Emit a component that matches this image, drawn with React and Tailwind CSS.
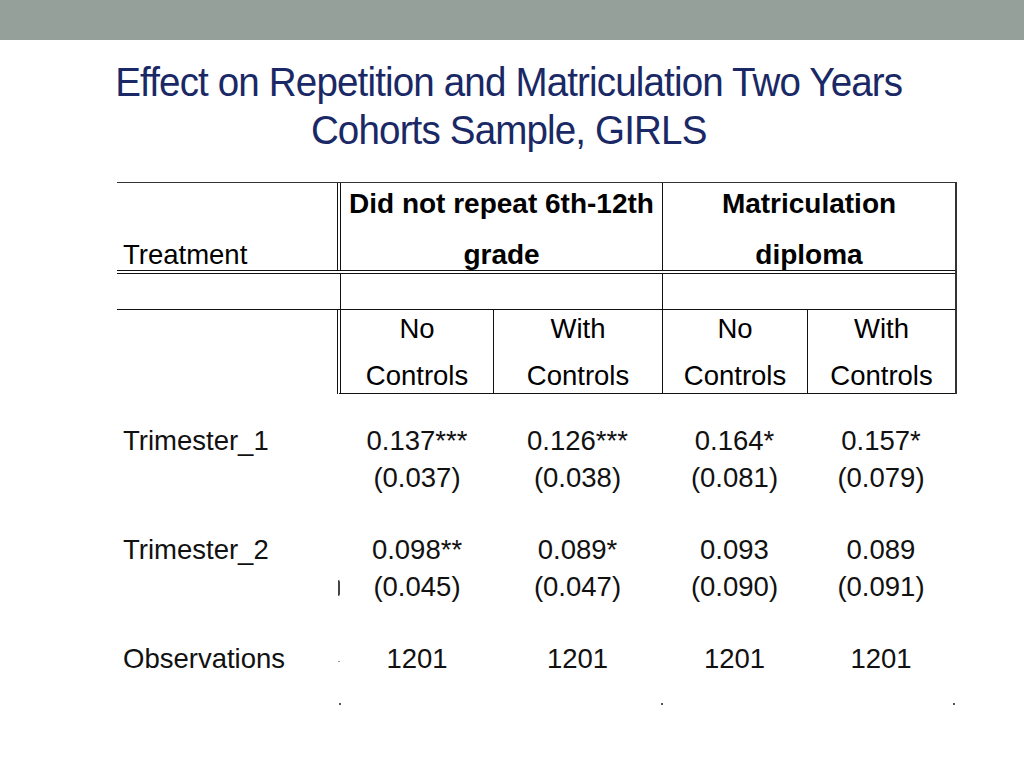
export default function App() {
  const rows = [
    { label: "Trimester_1", a: ["0.137***", "0.126***", "0.164*", "0.157*"], b: ["(0.037)", "(0.038)", "(0.081)", "(0.079)"] },
    { label: "Trimester_2", a: ["0.098**", "0.089*", "0.093", "0.089"], b: ["(0.045)", "(0.047)", "(0.090)", "(0.091)"], mark: true },
  ];
  return (
    <div className="min-h-[768px] w-[1024px] bg-white [font-family:'Liberation_Sans',Arial,sans-serif]">
      <div className="h-[40px] bg-[#95a09a]" />
      <div className="mt-[18px] flex scale-x-[0.94] flex-col items-center pr-[7px] text-[41px] leading-[48px] tracking-[-0.9px] text-[#1a2966]">
        <div>Effect on Repetition and Matriculation Two Years</div>
        <div>Cohorts Sample, GIRLS</div>
      </div>

      <div className="ml-[117px] mt-[28px] w-[840px] text-[27.5px] leading-[37px] text-black">
        <div className="border-t border-r-2 border-t-[#333] border-r-[#333]">
          {/* header row */}
          <div className="flex h-[91px] border-b-4 border-double border-b-[#111]">
            <div className="w-[220px] pl-[6px] pt-[53px]">Treatment</div>
            <div className="w-[325px] border-l-4 border-double border-l-[#111] pt-[2px] text-center text-[28px] font-bold">
              <div>Did not repeat 6th-12th</div>
              <div className="mt-[14px]">grade</div>
            </div>
            <div className="flex-1 border-l border-l-[#111] pt-[2px] text-center text-[28px] font-bold">
              <div>Matriculation</div>
              <div className="mt-[14px]">diploma</div>
            </div>
          </div>
          {/* empty row */}
          <div className="flex h-[36px] border-b border-b-[#111]">
            <div className="w-[223px]" />
            <div className="w-[322px] border-l border-l-[#111]" />
            <div className="flex-1 border-l border-l-[#111]" />
          </div>
          {/* subheader */}
          <div className="flex h-[84px]">
            <div className="w-[220px]" />
            <div className="w-[156px] border-b border-l-4 border-double border-b-[#111] border-l-[#111] text-center">
              <div>No</div>
              <div className="mt-[10px]">Controls</div>
            </div>
            <div className="w-[169px] border-b border-l border-b-[#111] border-l-[#111] text-center">
              <div>With</div>
              <div className="mt-[10px]">Controls</div>
            </div>
            <div className="w-[145px] border-b border-l border-b-[#111] border-l-[#111] text-center">
              <div>No</div>
              <div className="mt-[10px]">Controls</div>
            </div>
            <div className="flex-1 border-b border-l border-b-[#111] border-l-[#111] text-center">
              <div>With</div>
              <div className="mt-[10px]">Controls</div>
            </div>
          </div>
        </div>

        {/* body */}
        <div className="mt-[28px] text-[#111]">
          {rows.map((r, i) => (
            <div key={i} className="mb-[35px]">
              <div className="flex">
                <div className="w-[224px] pl-[6px]">{r.label}</div>
                <div className="w-[152px] text-center">{r.a[0]}</div>
                <div className="w-[169px] text-center">{r.a[1]}</div>
                <div className="w-[145px] text-center">{r.a[2]}</div>
                <div className="w-[148px] text-center">{r.a[3]}</div>
              </div>
              <div className="flex">
                <div className="flex w-[224px] items-center justify-end pr-[1px]">
                  {r.mark && <span className="mt-[3px] h-[16px] w-[2px] rounded-r-full bg-[#444]" />}
                </div>
                <div className="w-[152px] text-center">{r.b[0]}</div>
                <div className="w-[169px] text-center">{r.b[1]}</div>
                <div className="w-[145px] text-center">{r.b[2]}</div>
                <div className="w-[148px] text-center">{r.b[3]}</div>
              </div>
            </div>
          ))}
          <div className="flex">
            <div className="flex w-[224px] items-center justify-between pl-[6px] pr-[1px]">
              <span>Observations</span>
              <span className="mt-[6px] h-[1px] w-[2px] bg-[#999]" />
            </div>
            <div className="w-[152px] text-center">1201</div>
            <div className="w-[169px] text-center">1201</div>
            <div className="w-[145px] text-center">1201</div>
            <div className="w-[148px] text-center">1201</div>
          </div>
          <div className="mt-[26px] flex">
            <div className="w-[222px]" />
            <span className="h-[2px] w-[2px] bg-[#555]" />
            <div className="w-[320px]" />
            <span className="h-[2px] w-[2px] bg-[#555]" />
            <div className="w-[290px]" />
            <span className="h-[2px] w-[2px] bg-[#555]" />
          </div>
        </div>
      </div>
    </div>
  );
}
